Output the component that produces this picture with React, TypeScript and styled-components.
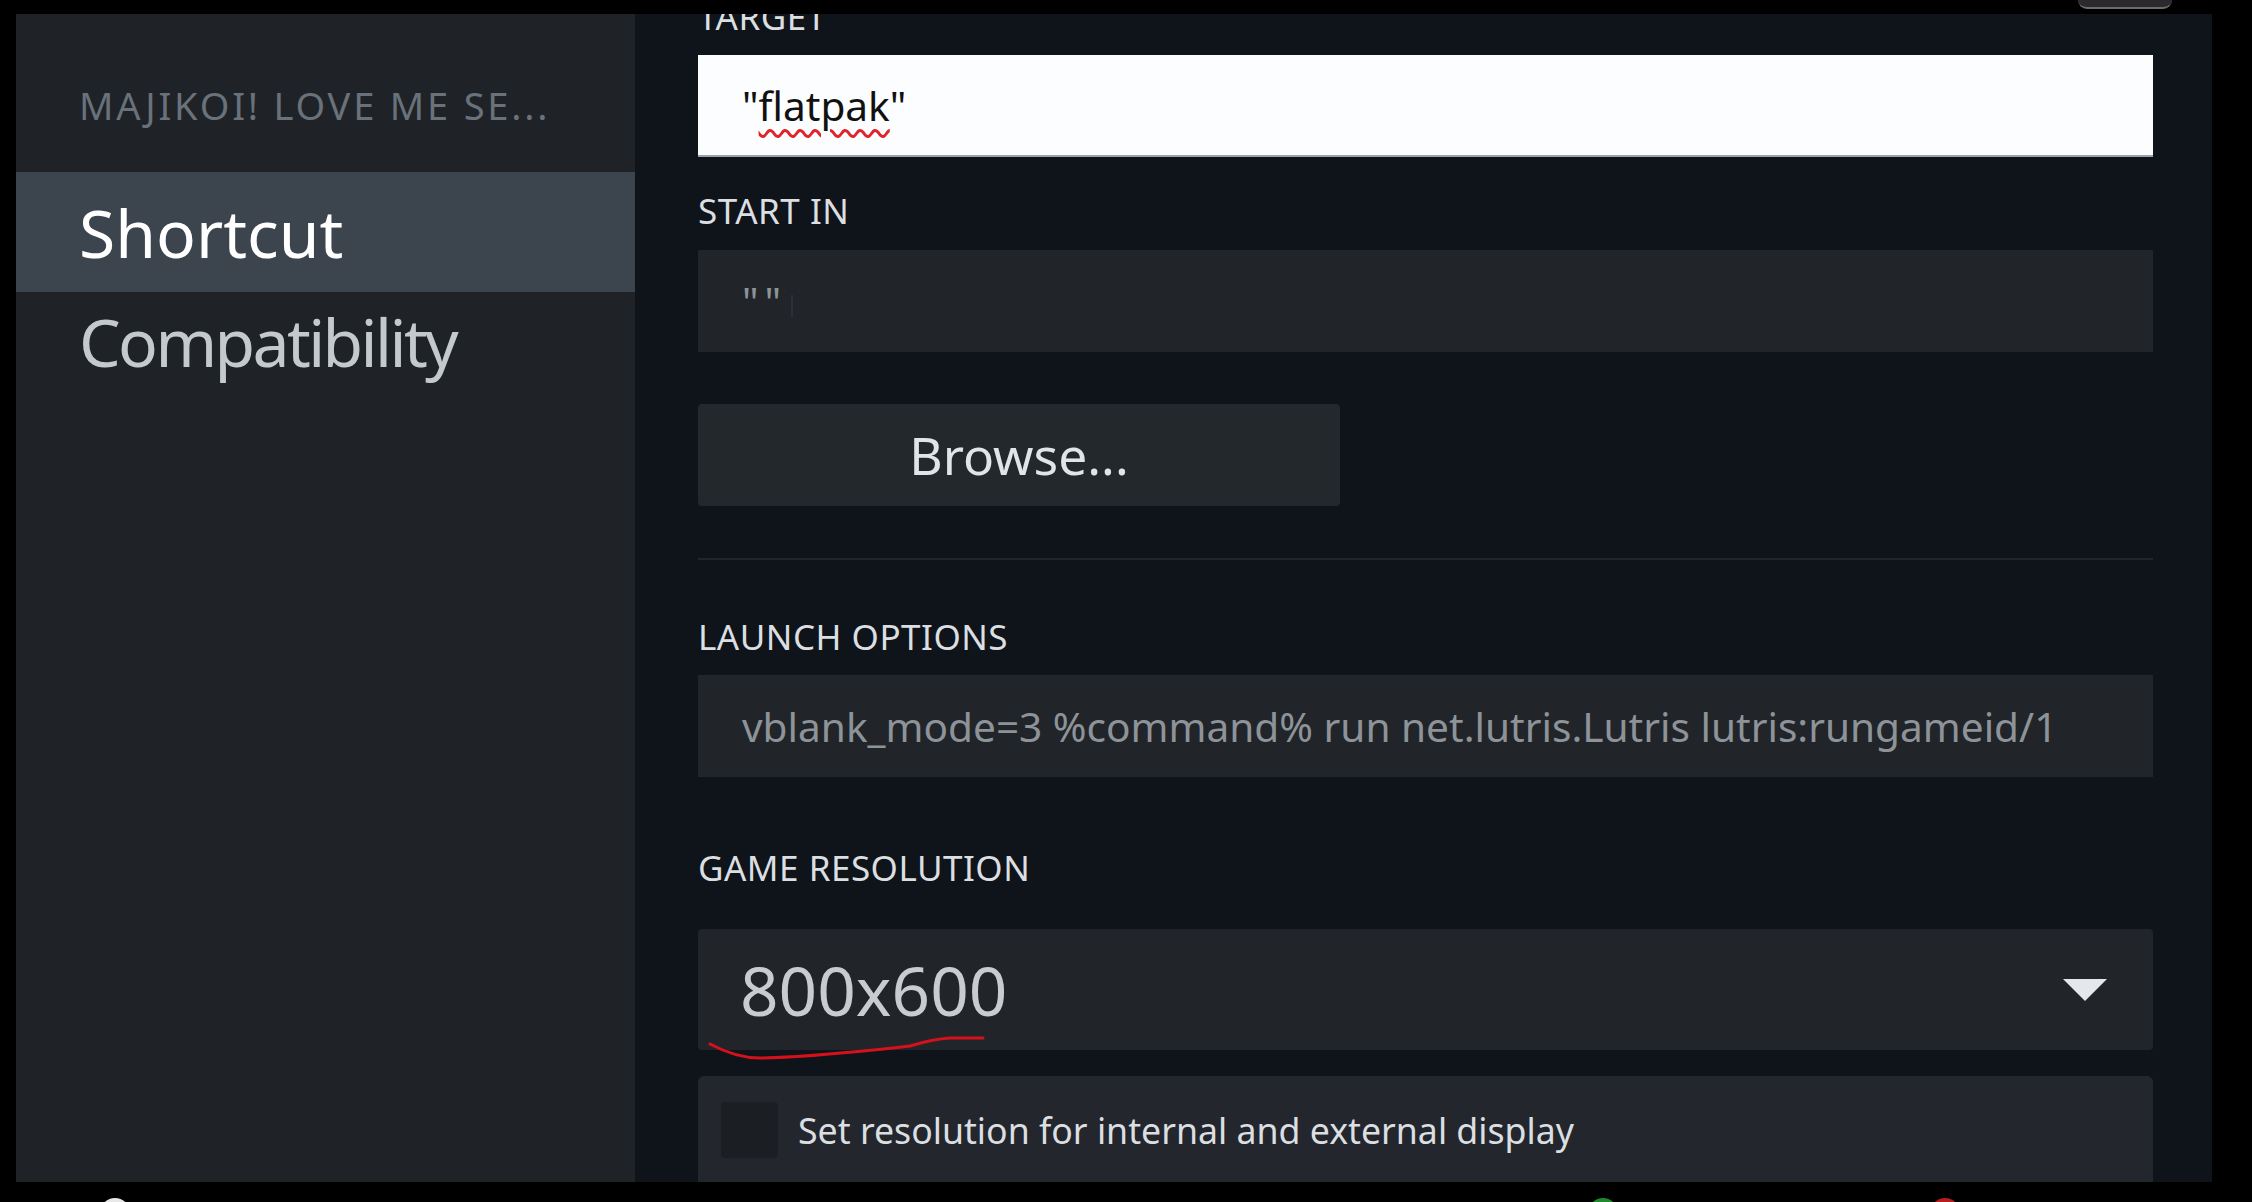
import React from 'react';
import styled, { createGlobalStyle } from 'styled-components';

const Global = createGlobalStyle`
  html, body { margin: 0; padding: 0; background: #000; }
  body { font-family: "Noto Sans", "Open Sans", sans-serif; }
`;

const Frame = styled.div`
  width: 2252px;
  height: 1202px;
  background: #000;
  display: flex;
  flex-direction: column;
  overflow: hidden;
`;

const TopBar = styled.div`
  height: 14px;
  flex: none;
  display: flex;
  justify-content: flex-end;
  padding-right: 80px;
`;

const TopBlob = styled.div`
  width: 94px;
  height: 7px;
  border-radius: 0 0 10px 10px;
  background: #2a2a2c;
  border-bottom: 2px solid #6b6b70;
`;

const Main = styled.div`
  display: flex;
  height: 1168px;
  width: 2196px;
  margin-left: 16px;
  flex: none;
`;

const Sidebar = styled.nav`
  width: 619px;
  flex: none;
  background: #1f2327;
  display: flex;
  flex-direction: column;
  padding-top: 66px;
`;

const GameTitle = styled.div`
  height: 50px;
  line-height: 50px;
  padding-left: 63px;
  margin-bottom: 42px;
  font-size: 38px;
  letter-spacing: 2.8px;
  color: #69727b;
  text-transform: uppercase;
  white-space: nowrap;
`;

const NavItem = styled.div<{ $active?: boolean; $h?: number }>`
  height: ${(p) => p.$h ?? 120}px;
  line-height: ${(p) => p.$h ?? 120}px;
  padding-left: 63px;
  font-size: 66px;
  letter-spacing: ${(p) => (p.$active ? 0 : -2.6)}px;
  color: ${(p) => (p.$active ? '#ffffff' : '#c4c9cd')};
  background: ${(p) => (p.$active ? '#3c444d' : 'transparent')};
`;

const Content = styled.section`
  flex: 1;
  background: #0e1419;
  overflow: hidden;
  padding: 0 59px 0 63px;
`;

const Inner = styled.div`
  margin-top: -17px;
  display: flex;
  flex-direction: column;
`;

const Label = styled.div<{ $gap?: number }>`
  height: 40px;
  line-height: 40px;
  font-size: 35px;
  letter-spacing: 0.5px;
  color: #dcdfe1;
  text-transform: uppercase;
  margin-bottom: ${(p) => p.$gap ?? 18}px;
`;

const TextBox = styled.div<{ $light?: boolean; $after?: number }>`
  height: 102px;
  box-sizing: border-box;
  display: flex;
  align-items: center;
  padding-left: 44px;
  font-size: 40.6px;
  white-space: nowrap;
  overflow: hidden;
  background: ${(p) => (p.$light ? '#fcfdfe' : '#212529')};
  color: ${(p) => (p.$light ? '#111' : '#8d9398')};
  border-bottom: ${(p) => (p.$light ? '2px solid #9aa3ab' : 'none')};
  margin-bottom: ${(p) => p.$after ?? 34}px;
`;

const Misspelled = styled.span`
  text-decoration: underline wavy #e0242c;
  text-decoration-thickness: 2.5px;
  text-underline-offset: 8px;
`;

const Quotes = styled.span`
  letter-spacing: 6px;
`;

const TextCaret = styled.span`
  width: 2px;
  height: 22px;
  margin-left: 4px;
  margin-top: 10px;
  background: #2b3136;
`;

const BrowseButton = styled.button`
  width: 642px;
  height: 102px;
  border: none;
  border-radius: 4px;
  background: #23282c;
  color: #e2e5e8;
  font-family: "Noto Sans", sans-serif;
  font-size: 51.5px;
  margin-bottom: 52px;
  padding: 0;
`;

const Divider = styled.hr`
  border: none;
  height: 2px;
  margin: 0 0 57px;
  background: #1f262b;
`;

const DropWrap = styled.div`
  position: relative;
  margin-bottom: 26px;
`;

const Dropdown = styled.div`
  height: 121px;
  border-radius: 4px;
  background: #212529;
  display: flex;
  align-items: center;
  justify-content: space-between;
  padding: 0 46px 0 42px;
  font-size: 67.5px;
  color: #c8ccd0;
`;

const Caret = styled.svg`
  width: 44px;
  height: 22px;
`;

const Scribble = styled.svg`
  position: absolute;
  left: 0;
  top: 0;
  width: 320px;
  height: 140px;
  overflow: visible;
  pointer-events: none;
`;

const CheckRow = styled.label`
  height: 108px;
  border-radius: 6px;
  background: #23272d;
  display: flex;
  align-items: center;
  padding: 0 0 8px 23px;
  gap: 20px;
  font-size: 35.7px;
  color: #dcdfe1;
`;

const CheckBox = styled.span`
  width: 57px;
  height: 56px;
  border-radius: 4px;
  background: #1b1e22;
  flex: none;
`;

const Footer = styled.div`
  height: 20px;
  flex: none;
  position: relative;
  overflow: hidden;
`;

const Dot = styled.span<{ $x: number; $c: string }>`
  position: absolute;
  left: ${(p) => p.$x}px;
  top: 16px;
  width: 30px;
  height: 30px;
  border-radius: 50%;
  background: ${(p) => p.$c};
`;

export default function App() {
  return (
    <Frame>
      <Global />
      <TopBar>
        <TopBlob />
      </TopBar>
      <Main>
        <Sidebar>
          <GameTitle>MAJIKOI! LOVE ME SE...</GameTitle>
          <NavItem $active>Shortcut</NavItem>
          <NavItem $h={98}>Compatibility</NavItem>
        </Sidebar>
        <Content>
          <Inner>
            <Label>Target</Label>
            <TextBox $light>
              "<Misspelled>flatpak</Misspelled>"
            </TextBox>

            <Label $gap={19}>Start In</Label>
            <TextBox $after={52}>
              <Quotes>""</Quotes>
              <TextCaret />
            </TextBox>

            <BrowseButton>Browse...</BrowseButton>
            <Divider />

            <Label>Launch Options</Label>
            <TextBox $after={71}>
              vblank_mode=3 %command% run net.lutris.Lutris lutris:rungameid/1
            </TextBox>

            <Label $gap={41}>Game Resolution</Label>
            <DropWrap>
              <Dropdown>
                <span>800x600</span>
                <Caret viewBox="0 0 44 22">
                  <path d="M0 0 H44 L22 22 Z" fill="#e4e8ea" />
                </Caret>
              </Dropdown>
              <Scribble viewBox="0 0 320 140">
                <path
                  d="M12 115 Q 40 130 65 129 Q 100 128 131 125 Q 180 121 212 117 Q 235 110 252 109 L 285 109"
                  fill="none"
                  stroke="#d5111b"
                  strokeWidth="3"
                  strokeLinecap="round"
                />
              </Scribble>
            </DropWrap>

            <CheckRow>
              <CheckBox />
              Set resolution for internal and external display
            </CheckRow>
          </Inner>
        </Content>
      </Main>
      <Footer>
        <Dot $x={100} $c="#e8e8e8" />
        <Dot $x={1588} $c="#1f8a2c" />
        <Dot $x={1930} $c="#b81d1d" />
      </Footer>
    </Frame>
  );
}
